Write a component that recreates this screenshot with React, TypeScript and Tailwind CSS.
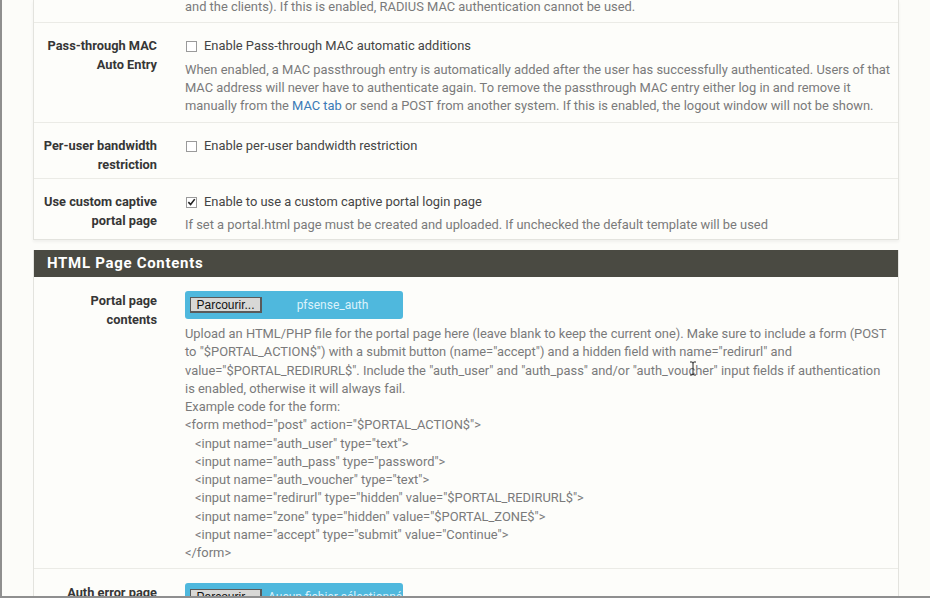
import { ReactNode } from 'react';

const FONT = "font-['Roboto','Liberation_Sans',sans-serif]";

interface RowProps {
  label: ReactNode;
  children: ReactNode;
  height: string;
  top?: boolean;
}

function Row({ label, children, height, top = true }: RowProps) {
  return (
    <div className={`flex pt-[14px] ${height} ${top ? 'border-t border-[#ebebe6]' : ''}`}>
      <div className="w-[123px] shrink-0 text-right text-[12.8px] font-bold leading-[18.6px] text-[#363636]">
        {label}
      </div>
      <div className="ml-[28px] w-[710px] text-[12.9px]">{children}</div>
    </div>
  );
}

function Checkbox({ checked, text }: { checked?: boolean; text: string }) {
  return (
    <div className="flex h-[18px] items-center leading-[18px] text-[#444]">
      <span className="ml-[1px] mr-[7px] flex h-[11px] w-[11px] items-center justify-center border border-[#9a9a9a] bg-white">
        {checked && (
          <svg viewBox="0 0 10 10" className="h-[10px] w-[10px]">
            <path d="M1.5 5.2 L4 7.8 L8.6 1.8" fill="none" stroke="#222" strokeWidth="1.8" />
          </svg>
        )}
      </span>
      <span className="whitespace-nowrap">{text}</span>
    </div>
  );
}

function FileBox({ name, left }: { name: string; left?: boolean }) {
  return (
    <div className="flex h-[28px] w-[218px] items-center overflow-hidden rounded-[3px] bg-[#4fb8dd] pl-[5px]">
      <span className="flex h-[16px] w-[72px] shrink-0 items-center justify-center border border-[#5a5a5a] border-b-[2px] border-r-[2px] bg-[#d8d8d6] font-['Liberation_Sans',sans-serif] text-[12px] leading-none text-[#111]">
        Parcourir...
      </span>
      <span
        className={`flex-1 whitespace-nowrap text-[12px] text-[#dcf2fb] ${left ? 'pl-[6px] text-left' : 'text-center'}`}
      >
        {name}
      </span>
    </div>
  );
}

const codeLines = [
  '<input name="auth_user" type="text">',
  '<input name="auth_pass" type="password">',
  '<input name="auth_voucher" type="text">',
  '<input name="redirurl" type="hidden" value="$PORTAL_REDIRURL$">',
  '<input name="zone" type="hidden" value="$PORTAL_ZONE$">',
  '<input name="accept" type="submit" value="Continue">',
];

export default function App() {
  return (
    <div className={`relative h-[598px] w-[930px] overflow-hidden border-b-2 border-l-2 border-[#8f8f8f] bg-[#fcfcf9] ${FONT}`}>
      {/* first panel, scrolled */}
      <div className="ml-[31px] w-[866px] border-x border-b border-[#e3e3de] bg-[#fdfdfa] shadow-[0_2px_3px_rgba(0,0,0,0.05)]">
        <div className="flex h-[22px]">
          <div className="w-[123px] shrink-0" />
          <div className="ml-[28px] -mt-[2px] whitespace-nowrap text-[12.9px] leading-[18.3px] text-[#7a7a7a]">
            and the clients). If this is enabled, RADIUS MAC authentication cannot be used.
          </div>
        </div>

        <Row height="h-[100px]" label={<>Pass-through MAC<br />Auto Entry</>}>
          <Checkbox text="Enable Pass-through MAC automatic additions" />
          <p className="mt-[6px] whitespace-nowrap leading-[18.2px] text-[#7a7a7a]">
            When enabled, a MAC passthrough entry is automatically added after the user has successfully authenticated. Users of that
            <br />
            MAC address will never have to authenticate again. To remove the passthrough MAC entry either log in and remove it
            <br />
            manually from the <span className="text-[#3a7ab6]">MAC tab</span> or send a POST from another system. If this is enabled, the logout window will not be shown.
          </p>
        </Row>

        <Row height="h-[56px]" label={<>Per-user bandwidth<br />restriction</>}>
          <Checkbox text="Enable per-user bandwidth restriction" />
        </Row>

        <Row height="h-[61px]" label={<>Use custom captive<br />portal page</>}>
          <Checkbox checked text="Enable to use a custom captive portal login page" />
          <p className="mt-[5px] whitespace-nowrap leading-[18.2px] text-[#7a7a7a]">
            If set a portal.html page must be created and uploaded. If unchecked the default template will be used
          </p>
        </Row>
      </div>

      {/* HTML Page Contents panel */}
      <div className="ml-[31px] mt-[10px] w-[866px] border-x border-[#e3e3de] bg-[#fdfdfa]">
        <div className="flex h-[27px] items-center bg-[#4a4a42] pl-[13px] text-[15px] font-bold tracking-[0.7px] text-white">
          HTML Page Contents
        </div>

        <Row top={false} height="h-[291px]" label={<span className="block pt-[1px]">Portal page<br />contents</span>}>
          <FileBox name="pfsense_auth" />
          <div className="mt-[6px] whitespace-nowrap leading-[18.25px] text-[#7a7a7a]">
            <p>
              Upload an HTML/PHP file for the portal page here (leave blank to keep the current one). Make sure to include a form (POST
              <br />
              to "$PORTAL_ACTION$") with a submit button (name="accept") and a hidden field with name="redirurl" and
              <br />
              value="$PORTAL_REDIRURL$". Include the "auth_user" and "auth_pass" and/or "auth_voucher" input fields if authentication
              <br />
              is enabled, otherwise it will always fail.
            </p>
            <p>Example code for the form:</p>
            <p>{'<form method="post" action="$PORTAL_ACTION$">'}</p>
            {codeLines.map(line => (
              <p key={line} className="pl-[10px]">{line}</p>
            ))}
            <p>{'</form>'}</p>
          </div>
        </Row>

        <Row height="h-[60px]" label={<span className="block pt-[1px]">Auth error page</span>}>
          <FileBox left name="Aucun fichier sélectionné" />
        </Row>
      </div>

      {/* text cursor over the help text */}
      <svg className="absolute left-[687px] top-[361px] h-[15px] w-[8px]" viewBox="0 0 8 15">
        <path d="M1 1 H3 Q4 1 4 2.5 V12.5 Q4 14 3 14 H1 M7 1 H5 Q4 1 4 2.5 M4 12.5 Q4 14 5 14 H7" fill="none" stroke="#222" strokeWidth="1" />
      </svg>
    </div>
  );
}
